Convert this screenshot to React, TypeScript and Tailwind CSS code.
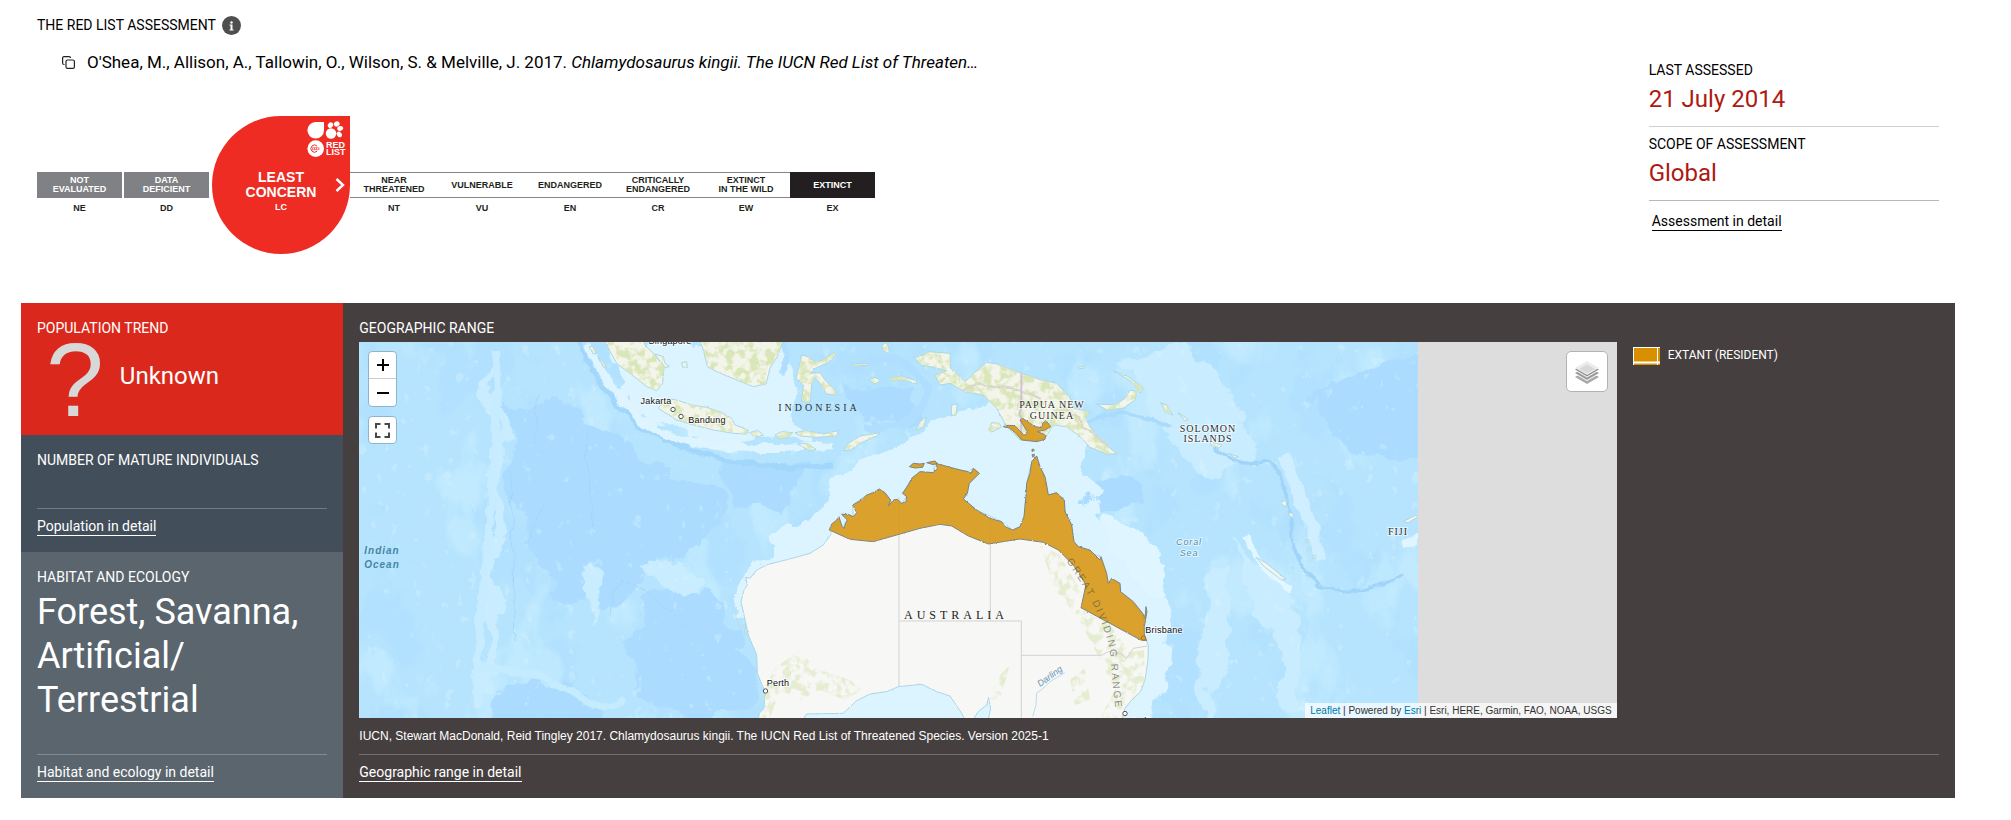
import React from "react";

const CARD_LABEL = "text-sm leading-[18px] uppercase";

function DetailLink({ children, dark = false }: { children: React.ReactNode; dark?: boolean }) {
  return (
    <a
      href="#detail"
      className={
        dark
          ? "inline-block border-b border-black text-sm leading-[18px] text-black"
          : "inline-block border-b border-white text-sm leading-[18px] text-white"
      }
    >
      {children}
    </a>
  );
}

function CardFooter({ children }: { children: React.ReactNode }) {
  return (
    <div className="mt-auto flex border-t border-white/25 pt-2 pb-4">
      <DetailLink>{children}</DetailLink>
    </div>
  );
}

type Category = { code: string; lines: string[] };

const UNRATED: Category[] = [
  { code: "NE", lines: ["NOT", "EVALUATED"] },
  { code: "DD", lines: ["DATA", "DEFICIENT"] },
];

const RATED: Category[] = [
  { code: "NT", lines: ["NEAR", "THREATENED"] },
  { code: "VU", lines: ["VULNERABLE"] },
  { code: "EN", lines: ["ENDANGERED"] },
  { code: "CR", lines: ["CRITICALLY", "ENDANGERED"] },
  { code: "EW", lines: ["EXTINCT", "IN THE WILD"] },
];

function CategoryCell({ category, box, cell }: { category: Category; box: string; cell: string }) {
  return (
    <li className={`mt-14 text-center text-[9px] font-bold ${cell}`}>
      <div className={`flex h-[26px] flex-col justify-center leading-[9px] ${box}`}>
        {category.lines.map((line) => (
          <span key={line}>{line}</span>
        ))}
      </div>
      <div className="leading-5 text-[#231f20]">{category.code}</div>
    </li>
  );
}

function RedListLogo() {
  return (
    <svg viewBox="0 0 40 36" className="absolute top-[5px] right-[3px] h-9 w-10" fill="#fff" aria-label="Red List">
      <path d="M8.5 1H17v8.5A8.3 8.3 0 1 1 8.5 1Z" />
      <circle cx="24" cy="12.5" r="5.2" />
      <ellipse cx="23.5" cy="4.2" rx="2.9" ry="2.5" transform="rotate(-50 23.5 4.2)" />
      <ellipse cx="29.8" cy="2.9" rx="2.9" ry="2.6" transform="rotate(-20 29.8 2.9)" />
      <ellipse cx="33.2" cy="7.4" rx="3" ry="2.4" transform="rotate(-15 33.2 7.4)" />
      <ellipse cx="32.3" cy="13.4" rx="3" ry="2.3" transform="rotate(50 32.3 13.4)" />
      <circle cx="8.7" cy="27.6" r="8.3" />
      <path d="M10 25A3.6 3.6 0 1 0 10 30.200" fill="none" stroke="#ee2c24" strokeWidth="1" />
      <path d="M5.500 26.700h6.500v2h-6.500zM7.500 26.700v2M9.500 26.700v2" fill="none" stroke="#ee2c24" strokeWidth=".6" />
      <text x="19" y="27.2" fontFamily="Liberation Sans, sans-serif" fontWeight="700" fontSize="9">RED</text>
      <text x="19" y="34.4" fontFamily="Liberation Sans, sans-serif" fontWeight="700" fontSize="9">LIST</text>
    </svg>
  );
}

function ThreatScale() {
  return (
    <ul className="mt-[42px] mb-[49px] flex items-start font-['Liberation_Sans',sans-serif]">
      {UNRATED.map((c) => (
        <CategoryCell key={c.code} category={c} cell="w-[87px] pr-[2px]" box="bg-[#808184] text-white" />
      ))}
      <li className="relative z-10 ml-px flex size-[138px] flex-col items-center rounded-full rounded-tr-none bg-[#ee2c24] pt-[54px] text-center font-bold text-white">
        <RedListLogo />
        <span className="text-sm leading-[15px]">LEAST</span>
        <span className="text-sm leading-[15px]">CONCERN</span>
        <span className="text-[9px] leading-[15px]">LC</span>
        <svg viewBox="0 0 10 14" className="absolute top-[62px] right-[5px] h-[14px] w-[10px]" fill="none" stroke="#fff" strokeWidth="2.400">
          <path d="M1.500 1l6.500 6-6.500 6" />
        </svg>
      </li>
      {RATED.map((c) => (
        <CategoryCell key={c.code} category={c} cell="w-[88px]" box="border-y border-[#858585] bg-white text-[#231f20]" />
      ))}
      <CategoryCell category={{ code: "EX", lines: ["EXTINCT"] }} cell="w-[85px]" box="bg-[#231f20] text-white" />
    </ul>
  );
}

const RANGE =
  "M328 600L335 582L350 570L357 560L366 590L373 595L376 580L382 570L365 553L385 553L400 560L410 548L398 525L425 510L440 495L460 488L478 477L495 488L512 510L505 528L520 510L532 508L545 520L558 515L560 500L548 490L565 465L575 445L600 425L640 428L652 415L648 400L690 412L720 420L745 425L752 432L760 415L778 430L748 460L742 490L730 507L770 540L810 565L845 575L855 590L878 600L900 590L912 560L918 500L920 460L930 430L935 395L950 378L960 410L975 440L980 465L985 495L1010 488L1033 510L1035 545L1055 585L1062 635L1075 650L1110 660L1140 690L1143 680L1160 730L1165 760L1175 745L1200 760L1202 785L1240 815L1268 850L1275 865L1278 830L1281 845L1273 890L1273 915L1280 932L1262 930L1083 833L1098 765L1060 705L1015 660L970 637L900 627L805 642L745 618L695 588L660 583L600 595L530 615L460 635L390 628Z";

const AUSTRALIA =
  "M328 600L350 570L372 590L382 570L365 553L400 560L398 525L440 495L478 477L512 510L505 528L525 508L545 520L560 500L548 490L575 445L600 425L640 428L648 400L690 412L745 425L760 415L778 430L748 460L730 507L770 540L845 575L878 600L900 590L912 560L920 460L935 395L950 378L960 410L985 495L1010 488L1033 510L1035 545L1055 585L1062 635L1075 650L1140 680L1165 760L1200 760L1202 785L1268 850L1273 915L1285 945L1284 990L1275 1050L1262 1085L1235 1110L1215 1135L1200 1190L800 1190L812 1135L806 1102L800 1125L775 1145L745 1190L725 1150L705 1120L690 1098L650 1085L605 1063L535 1070L500 1085L450 1092L410 1112L370 1150L260 1152L235 1190L112 1190L118 1150L132 1135L135 1085L112 1030L110 975L85 915L72 855L63 815L72 780L82 765L77 742L90 745L110 720L145 703L205 688L270 670L310 645L335 610Z";

const ASIA_LAND = [
  // Sumatra, Java and Borneo
  "M-375 -5L-340 45L-310 100L-270 130L-220 170L-190 182L-172 160L-168 110L-195 75L-225 45L-240 -5Z",
  "M-185 235L-165 205L-130 210L-85 225L-40 232L0 245L35 265L45 285L85 300L80 312L40 310L-20 300L-80 285L-130 270Z",
  "M-75 -5L-50 60L-38 110L-10 125L45 148L100 170L138 162L150 115L172 80L188 36L188 -5Z",
  // Sulawesi
  "M240 100L245 75L265 80L285 97L310 90L340 68L348 75L325 97L280 118L272 130L300 128L315 150L345 180L350 195L320 192L300 160L284 140L275 165L270 217L245 214L250 165L228 145Z",
  // Lesser Sunda islands, Timor, Sumba
  "M90 308L112 300L130 315L105 322Z",
  "M165 315L185 305L218 308L205 322L180 326Z",
  "M232 342L262 340L288 358L270 362Z",
  "M225 308L260 302L310 312L355 302L350 318L290 322L240 318Z",
  "M372 362L385 340L420 318L480 308L470 318L420 340L392 360Z",
  "M588 302L600 275L620 262L610 290Z",
  // Banda sea islands
  "M448 150L465 142L482 152L465 162Z",
  "M508 145L545 138L590 152L590 162L550 150L515 152Z",
  "M485 45L500 38L508 62L500 70L490 60Z",
  "M395 103L440 101L450 106L400 108Z",
  "M695 225L712 222L708 255L694 258Z",
  "M805 300L815 278L838 280L844 292L815 306Z",
  // New Guinea
  "M582 82L610 75L625 65L690 70L692 115L720 140L735 155L760 132L800 97L830 102L905 130L965 150L1010 160L1048 200L1062 235L1110 245L1095 262L1110 290L1140 330L1192 372L1160 372L1110 352L1080 320L1040 290L1000 285L975 325L900 330L860 290L846 265L830 235L790 195L735 185L690 160L660 165L645 135L680 122L640 112L605 105Z",
  // New Britain, New Ireland and the Solomons
  "M1130 222L1185 225L1215 205L1230 180L1250 185L1245 210L1210 235L1160 240Z",
  "M1180 122L1225 140L1270 175L1262 190L1235 155Z",
  "M1322 218L1340 225L1358 255L1335 245Z",
  "M1375 248L1405 268L1395 272Z",
  "M1470 335L1505 345L1500 352L1475 348Z",
  "M1525 370L1555 380L1545 384Z",
  "M1072 112L1095 108L1092 115L1078 116Z",
  // Vanuatu, New Caledonia and Fiji
  "M1686 510L1700 515L1698 532L1688 525Z",
  "M1705 545L1720 552L1718 565L1708 556Z",
  "M1608 682L1640 700L1698 748L1685 750L1635 712Z",
  "M2050 575L2088 555L2095 560L2065 578Z",
  // Islands off Sumatra
  "M-392 50L-382 48L-372 70L-380 72Z",
  "M-365 80L-352 95L-340 115L-350 112Z",
  "M-195 72L-170 80L-165 100L-150 110L-165 112L-180 95Z",
  "M-115 98L-100 95L-98 112L-112 112Z",
];

const RANGE_ISLANDS = [
  "M568 410L580 400L600 402L613 400L608 412L585 414Z",
  "M620 398L645 393L652 400L640 404Z",
  "M850 290L865 286L885 287L905 308L915 316L922 305L900 270L908 265L930 280L945 290L965 293L970 275L982 276L992 290L975 300L952 305L978 315L975 328L950 335L905 330L890 312L868 294Z",
  "M936 358L942 358L942 364L936 364ZM936 374L943 373L943 380L938 381Z",
];

function MapLabel({
  x,
  y,
  kind,
  children,
}: {
  x: number;
  y: number;
  kind: "country" | "city" | "sea";
  children: React.ReactNode;
}) {
  const styles = {
    country: "fill-[#303030] font-['Liberation_Serif',serif] text-[10px] tracking-widest",
    city: "fill-[#111111] font-['Liberation_Sans',sans-serif] text-[9px] tracking-wide",
    sea: "fill-[#4f90ad] font-['Liberation_Sans',sans-serif] text-[9px] italic tracking-widest",
  };
  return (
    <text x={x} y={y} textAnchor="middle" className={styles[kind]} stroke="#fff" strokeOpacity=".6" strokeWidth="2" paintOrder="stroke">
      {children}
    </text>
  );
}

function RangeMap() {
  return (
    <svg
      viewBox="359 342 1059 376"
      className="h-full w-[1059px] shrink-0"
      role="img"
      aria-label="Range of Chlamydosaurus kingii across northern Australia and southern New Guinea"
    >
      <defs>
        <filter id="rough" x="-5%" y="-5%" width="110%" height="110%">
          <feTurbulence type="fractalNoise" baseFrequency=".06" numOctaves="4" seed="3" />
          <feDisplacementMap in="SourceGraphic" scale="9" xChannelSelector="R" yChannelSelector="G" />
        </filter>
        <filter id="coast" x="-5%" y="-5%" width="110%" height="110%">
          <feTurbulence type="fractalNoise" baseFrequency=".15" numOctaves="3" seed="8" />
          <feDisplacementMap in="SourceGraphic" scale="6" xChannelSelector="R" yChannelSelector="G" />
        </filter>
        <filter id="depth" x="-10%" y="-10%" width="120%" height="120%">
          <feTurbulence type="fractalNoise" baseFrequency=".022" numOctaves="6" seed="5" />
          <feDisplacementMap in="SourceGraphic" scale="45" xChannelSelector="R" yChannelSelector="G" />
        </filter>
        <filter id="ridges" x="0" y="0" width="100%" height="100%" colorInterpolationFilters="sRGB">
          <feTurbulence type="fractalNoise" baseFrequency=".018 .011" numOctaves="6" seed="21" />
          <feColorMatrix values="0 0 0 0 .8  0 0 0 0 .94  0 0 0 0 1  8 0 0 0 -4.6" />
        </filter>
        <filter id="basins" x="0" y="0" width="100%" height="100%" colorInterpolationFilters="sRGB">
          <feTurbulence type="fractalNoise" baseFrequency=".014 .01" numOctaves="6" seed="40" />
          <feColorMatrix values="0 0 0 0 .67  0 0 0 0 .865  0 0 0 0 1  0 14 0 0 -7.8" />
        </filter>
        <filter id="seamounts" x="0" y="0" width="100%" height="100%" colorInterpolationFilters="sRGB">
          <feTurbulence type="fractalNoise" baseFrequency=".09 .07" numOctaves="4" seed="77" />
          <feColorMatrix values="0 0 0 0 .88  0 0 0 0 .97  0 0 0 0 1  12 0 0 0 -8.400" />
        </filter>
        <filter id="vegetation" x="0" y="0" width="100%" height="100%" colorInterpolationFilters="sRGB">
          <feTurbulence type="fractalNoise" baseFrequency=".12" numOctaves="5" seed="12" />
          <feColorMatrix values="0 0 0 0 .85  0 0 0 0 .9  0 0 0 0 .72  5 0 0 0 -2.2" />
        </filter>
        <clipPath id="tropicLand">
          <path transform="translate(720 330) scale(.33333)" d={ASIA_LAND.join("")} />
        </clipPath>
        <clipPath id="greenBelts">
          <path d="M760 718L764 690L775 668L800 650L815 668L850 680L862 690L845 700L820 690L800 700L780 690L770 718ZM1125 718L1145 680L1144 650L1130 652L1110 625L1085 605L1075 612L1095 650L1115 690L1100 718ZM1070 680L1085 668L1090 700L1075 705ZM990 700L1000 675L1010 665L1000 700ZM1040 545L1060 555L1080 590L1072 610L1055 590Z" />
        </clipPath>
        <path id="dividingRange" d="M1066 561Q1102 610 1110 652Q1113 690 1117 722" />
      </defs>

      <rect x="359" y="342" width="1059" height="376" fill="#b6e4fe" />
      <rect x="359" y="342" width="1059" height="376" filter="url(#basins)" opacity=".4" />
      <rect x="359" y="342" width="1059" height="376" filter="url(#ridges)" opacity=".5" />

      <g filter="url(#depth)">
        <path
          fill="#abdcff"
          d="M500 400L560 400L610 440L670 470L725 485L730 510L700 540L660 570L600 610L560 600L530 560L510 480ZM725 465L805 465L790 515L740 510ZM640 600L700 590L745 640L745 700L700 718L640 690L625 650ZM500 690L560 680L600 705L600 730L490 730ZM850 385L915 390L920 420L860 425ZM1060 490L1130 475L1150 500L1090 510ZM1310 400L1418 350L1430 460L1370 460Z"
        />
        <path
          fill="#c9edff"
          d="M490 370L500 370L504 560L494 700L484 700ZM590 560L605 570L590 620L580 600ZM650 570L690 560L690 600L665 590ZM1200 560L1225 560L1230 640L1215 718L1205 718ZM1235 540L1270 570L1305 640L1295 718L1285 718L1275 640ZM1110 360L1180 350L1240 420L1260 460L1190 470L1160 420Z"
        />
        <path
          fill="#dcf4ff"
          d="M600 342L642 342L700 342L790 342L800 390L800 430L740 445L650 430L610 380ZM750 730L768 690L755 640L737 600L755 560L800 525L840 480L880 448L925 430L965 410L990 385L1060 410L1085 440L1078 470L1090 500L1120 545L1160 575L1168 620L1165 665L1152 700L1140 730ZM840 730L905 700L960 710L1010 690L1020 730Z"
        />
        <path fill="#dff5ff" d="M1100 510L1135 520L1160 555L1160 590L1130 580L1110 550ZM1395 540L1425 525L1425 545L1400 550Z" />
      </g>

      <rect x="359" y="342" width="1059" height="376" filter="url(#seamounts)" opacity=".3" />

      <g fill="none" filter="url(#rough)">
        <path d="M578 340Q608 420 683 447T833 465" stroke="#a2d6fb" strokeWidth="5" />
        <path d="M1213 448Q1242 470 1268 461Q1290 480 1293 540Q1303 590 1347 592Q1378 590 1403 572" stroke="#a0d4fa" strokeWidth="3" />
        <path d="M782 374Q792 345 777 335M853 368Q902 343 928 388Q922 433 863 428" stroke="#b0deff" strokeWidth="7" />
        <path d="M1088 421Q1128 403 1168 428" stroke="#a9dbfd" strokeWidth="4" />
        <path d="M588 345Q613 400 653 428T833 445" stroke="#def5ff" strokeWidth="8" />
        <path d="M1283 455Q1308 510 1320 560" stroke="#cfeeff" strokeWidth="12" />
        <path d="M1246 535Q1262 575 1293 590" stroke="#e2f7ff" strokeWidth="6" />
        <path d="M495 350Q500 420 490 520T479 640L478 710" stroke="#c8ecff" strokeWidth="8" />
        <path d="M478 668Q533 668 573 693T623 698" stroke="#c5ebff" strokeWidth="7" />
        <path d="M621 579Q653 593 688 628M621 579L608 615M536 393V443M586 433L593 533M511 473L515 643M543 503Q533 523 527 543" stroke="#a3d6f9" strokeWidth="1" />
      </g>

      <g transform="translate(720 330) scale(.33333)" stroke="#a9d6e6" strokeWidth="3" filter="url(#coast)">
        <path fill="#f3f4ea" d={ASIA_LAND.join("")} />
        <path fill="#f7f7f5" d={AUSTRALIA} />
      </g>
      <g clipPath="url(#tropicLand)">
        <rect x="359" y="342" width="1059" height="130" filter="url(#vegetation)" />
      </g>
      <g clipPath="url(#greenBelts)" opacity=".6">
        <rect x="700" y="540" width="480" height="178" filter="url(#vegetation)" />
      </g>
      <path d="M964 390Q985 380 1000 388Q1025 390 1040 398M1065 405Q1085 425 1105 445" stroke="#d9d8c8" strokeWidth="2" fill="none" filter="url(#rough)" />

      <g transform="translate(720 330) scale(.33333)" fill="none" stroke="#d2d2d4" strokeWidth="3">
        <path d="M537 500V1070M811 560V872M538 873H904V1175M904 976H1145L1165 965L1200 970L1220 985L1240 955L1282 948" />
        <path d="M904 130V235L898 250L904 265V330" stroke="#d0c3d3" strokeWidth="6" />
        <path d="M1035 1028L990 1055L975 1070L950 1090L948 1125L938 1160" stroke="#b5def0" />
      </g>
      <g fill="none" stroke="#b9dce2" strokeWidth="1">
        <path d="M735 615l5 12l6 -4l-2 12l4 -2M760 564h1" />
        <circle cx="1307" cy="541" r="2" />
        <circle cx="1309" cy="550" r="2" />
        <circle cx="1314" cy="557" r="2" />
        <circle cx="1293" cy="568" r="1" />
      </g>

      <g transform="translate(720 330) scale(.33333)" fill="#d79819" fillOpacity=".9" stroke="#7d8580" strokeWidth="3" filter="url(#coast)">
        <path d={RANGE} />
        {RANGE_ISLANDS.map((d) => (
          <path key={d} d={d} />
        ))}
      </g>

      <text className="fill-[#4d4d44]/60 font-['Liberation_Sans',sans-serif] text-[10px] tracking-[2px]">
        <textPath href="#dividingRange">GREAT DIVIDING RANGE</textPath>
      </text>

      <g fill="#fff" stroke="#555" strokeWidth="1">
        <circle cx="673" cy="409.500" r="2.200" />
        <circle cx="681" cy="416.500" r="2.200" />
        <circle cx="765.500" cy="691" r="2.200" />
        <circle cx="1125" cy="713.500" r="2.200" />
        <circle cx="1143.500" cy="638" r="2.200" fill="none" stroke="#a87714" />
      </g>

      <MapLabel x={670} y={344} kind="city">Singapore</MapLabel>
      <MapLabel x={656} y={404} kind="city">Jakarta</MapLabel>
      <MapLabel x={707} y={423} kind="city">Bandung</MapLabel>
      <MapLabel x={778} y={686} kind="city">Perth</MapLabel>
      <MapLabel x={1164} y={633} kind="city">Brisbane</MapLabel>
      <MapLabel x={1146} y={724} kind="city">Sydney</MapLabel>
      <text x="819" y="411" textAnchor="middle" className="fill-[#303030] font-['Liberation_Serif',serif] text-[10px] tracking-[3px]">INDONESIA</text>
      <MapLabel x={1052} y={408} kind="country">PAPUA NEW</MapLabel>
      <MapLabel x={1052} y={419} kind="country">GUINEA</MapLabel>
      <MapLabel x={1208} y={432} kind="country">SOLOMON</MapLabel>
      <MapLabel x={1208} y={442} kind="country">ISLANDS</MapLabel>
      <MapLabel x={1398} y={535} kind="country">FIJI</MapLabel>
      <text x="956" y="619" textAnchor="middle" className="fill-[#222222] font-['Liberation_Serif',serif] text-xs tracking-[4px]">AUSTRALIA</text>
      <text x="382" y="554" textAnchor="middle" className="fill-[#4587a3] font-['Liberation_Sans',sans-serif] text-[10px] font-bold italic tracking-widest">Indian</text>
      <text x="382" y="568" textAnchor="middle" className="fill-[#4587a3] font-['Liberation_Sans',sans-serif] text-[10px] font-bold italic tracking-widest">Ocean</text>
      <MapLabel x={1189} y={545} kind="sea">Coral</MapLabel>
      <MapLabel x={1189} y={556} kind="sea">Sea</MapLabel>
      <text x="1040" y="687" transform="rotate(-36 1040 687)" className="fill-[#6a96b5] font-['Liberation_Sans',sans-serif] text-[9px] italic">Darling</text>
    </svg>
  );
}

function MapControls() {
  return (
    <div className="absolute top-[9px] left-[9px] flex flex-col gap-[9px]">
      <div className="flex w-[29px] flex-col overflow-hidden rounded border border-[#8fb4cb] bg-white">
        <button type="button" aria-label="Zoom in" className="flex h-[27px] items-center justify-center border-b border-[#ccc]">
          <svg viewBox="0 0 12 12" className="size-3" stroke="#000" strokeWidth="2">
            <path d="M0 6h12M6 0v12" />
          </svg>
        </button>
        <button type="button" aria-label="Zoom out" className="flex h-[27px] items-center justify-center">
          <svg viewBox="0 0 12 12" className="size-3" stroke="#000" strokeWidth="2">
            <path d="M0 6h12" />
          </svg>
        </button>
      </div>
      <button type="button" aria-label="Full screen" className="flex h-7 w-[29px] items-center justify-center rounded border border-[#8fb4cb] bg-white">
        <svg viewBox="0 0 15 15" className="size-[15px]" fill="none" stroke="#484848" strokeWidth="2">
          <path d="M1 5.500V1h4.500M9.500 1H14v4.500M14 9.500V14H9.500M5.500 14H1V9.500" />
        </svg>
      </button>
    </div>
  );
}

function LayersButton() {
  return (
    <button
      type="button"
      aria-label="Layers"
      className="absolute top-[9px] right-[9px] flex h-[41px] w-[42px] items-center justify-center rounded-[5px] border border-[#b2b2b2] bg-white"
    >
      <svg viewBox="0 0 26 24" className="h-6 w-[26px]">
        <path d="M13 10L25 17l-12 7L1 17Z" fill="#a9a9a9" />
        <path d="M13 7.500L25 14l-12 7L1 14Z" fill="#fff" />
        <path d="M13 6.500L25 13l-12 7L1 13Z" fill="#9b9b9b" />
        <path d="M13 4.500L25 10.500l-12 7L1 10.500Z" fill="#fff" />
        <path d="M13 3.500L25 9.500l-12 7L1 9.500Z" fill="#8f8f8f" />
        <path d="M13 1L25 8l-12 7L1 8Z" fill="#ececec" />
        <path d="M13 4.500L21 9l-8 4.500L5 9Z" fill="#d8d8d8" />
      </svg>
    </button>
  );
}

export default function App() {
  return (
    <main className="min-h-screen bg-white pr-14 pl-[21px] font-[Roboto,sans-serif] text-black">
      <header className="flex">
        <section className="min-w-0 flex-1 px-4 pt-[15px]">
          <div className="flex h-5 items-center gap-[6px]">
            <h2 className={CARD_LABEL}>The Red List Assessment</h2>
            <button type="button" aria-label="About this assessment" className="size-[19px] rounded-full bg-[#4f4f4f]">
              <svg viewBox="0 0 19 19" fill="#fff">
                <circle cx="9.500" cy="6.500" r="1.200" />
                <path d="M7.500 8.500h3v5h1v1h-4v-1h1v-4h-1Z" />
              </svg>
            </button>
          </div>
          <div className="mt-[15px] flex items-center gap-3 pl-[25px]">
            <button type="button" aria-label="Copy citation">
              <svg viewBox="0 0 13 13" className="size-[13px]" fill="none" stroke="#222" strokeWidth="1.200">
                <rect x="4" y="4" width="8.400" height="8.400" rx="1.500" />
                <path d="M2.500 8.500h-.4a1.500 1.500 0 0 1-1.500-1.500V2.100A1.500 1.500 0 0 1 2.100.6h5A1.500 1.500 0 0 1 8.500 2" />
              </svg>
            </button>
            <p className="truncate text-[17px] leading-6">
              O&apos;Shea, M., Allison, A., Tallowin, O., Wilson, S. &amp; Melville, J. 2017.{" "}
              <em>Chlamydosaurus kingii. The IUCN Red List of Threaten…</em>
            </p>
          </div>
          <ThreatScale />
        </section>

        <aside className="w-1/6 px-4 pt-[61px]">
          <div className="border-b border-[#d0d0d0] pb-[11px]">
            <h3 className={CARD_LABEL}>Last assessed</h3>
            <p className="mt-1 text-2xl leading-8 text-[#ad1a12]">21 July 2014</p>
          </div>
          <div className="border-b border-[#b8b8b8] pt-2 pb-[11px]">
            <h3 className={CARD_LABEL}>Scope of assessment</h3>
            <p className="mt-1 text-2xl leading-8 text-[#ad1a12]">Global</p>
          </div>
          <div className="flex pt-[11px] pl-[3px]">
            <DetailLink dark>Assessment in detail</DetailLink>
          </div>
        </aside>
      </header>

      <div className="flex text-white">
        <div className="flex w-1/6 flex-col">
          <section className="bg-[#da291c] px-4 pt-4">
            <h3 className={CARD_LABEL}>Population trend</h3>
            <div className="flex h-[98px] items-start gap-4 pl-[9px]">
              <span aria-hidden="true" className="pt-1 font-['Liberation_Sans',sans-serif] text-[104px] leading-[78px] text-[#d8d8d8]">
                ?
              </span>
              <span className="pt-[23px] text-2xl leading-8">Unknown</span>
            </div>
          </section>
          <section className="flex flex-col bg-[#424e59] px-4 pt-4">
            <h3 className={`mb-[39px] ${CARD_LABEL}`}>Number of mature individuals</h3>
            <CardFooter>Population in detail</CardFooter>
          </section>
          <section className="flex flex-1 flex-col bg-[#5a656e] px-4 pt-4">
            <h3 className={CARD_LABEL}>Habitat and ecology</h3>
            <p className="mt-1 text-4xl leading-[44px]">Forest, Savanna, Artificial/ Terrestrial</p>
            <CardFooter>Habitat and ecology in detail</CardFooter>
          </section>
        </div>

        <section className="flex min-w-0 flex-1 flex-col bg-[#463f3f] pt-4">
          <h3 className={`px-4 ${CARD_LABEL}`}>Geographic range</h3>
          <div className="mt-[5px] flex">
            <div className="w-4/5 px-4">
              <div className="relative flex h-[376px] overflow-hidden bg-[#ddd]">
                <RangeMap />
                <MapControls />
                <LayersButton />
                <div className="absolute right-0 bottom-0 bg-white/70 px-[5px] font-['Liberation_Sans',sans-serif] text-[10px] leading-[15px] text-[#333]">
                  <a href="#leaflet" className="text-[#0078a8]">Leaflet</a> | Powered by{" "}
                  <a href="#esri" className="text-[#0078a8]">Esri</a> | Esri, HERE, Garmin, FAO, NOAA, USGS
                </div>
              </div>
              <p className="font-['Liberation_Sans',sans-serif] text-xs leading-9">
                IUCN, Stewart MacDonald, Reid Tingley 2017. Chlamydosaurus kingii. The IUCN Red List of Threatened Species. Version 2025-1
              </p>
            </div>
            <div className="flex w-1/5 items-start gap-2 pt-[5px]">
              <svg viewBox="0 0 27 18" className="h-[18px] w-[27px]">
                <path d="M0 0h27v18H0z" fill="#d99000" />
                <path d="M.5 0v18M0 .5h27M24.500 0v18" stroke="#fff" />
                <path d="M0 15.500h27" stroke="#fff" strokeWidth="2" />
              </svg>
              <span className="text-xs leading-4 uppercase">Extant (resident)</span>
            </div>
          </div>
          <div className="flex flex-col px-4">
            <CardFooter>Geographic range in detail</CardFooter>
          </div>
        </section>
      </div>
    </main>
  );
}
